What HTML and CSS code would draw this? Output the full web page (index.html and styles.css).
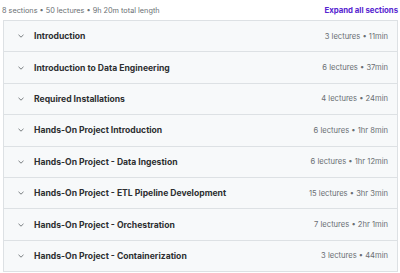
FILE: index.html
```html
<!DOCTYPE html>
<html lang="en">
<head>
    <meta charset="UTF-8">
    <meta name="viewport" content="width=device-width, initial-scale=1.0">
    <title>Course content</title>
    <link rel="stylesheet" href="styles.css">
</head>
<body>
    <div class="curriculum">
        <div class="summary">
            <span class="meta">8 sections • 50 lectures • 9h 20m total length</span>
            <button class="expand-all">Expand all sections</button>
        </div>

        <div class="sections">
            <div class="section">
                <span class="chevron"><svg viewBox="0 0 10 10"><path d="M2.5 3.8 5 6.2 7.5 3.8"/></svg></span>
                <span class="title">Introduction</span>
                <span class="info">3 lectures • 11min</span>
            </div>
            <div class="section">
                <span class="chevron"><svg viewBox="0 0 10 10"><path d="M2.5 3.8 5 6.2 7.5 3.8"/></svg></span>
                <span class="title">Introduction to Data Engineering</span>
                <span class="info">6 lectures • 37min</span>
            </div>
            <div class="section">
                <span class="chevron"><svg viewBox="0 0 10 10"><path d="M2.5 3.8 5 6.2 7.5 3.8"/></svg></span>
                <span class="title">Required Installations</span>
                <span class="info">4 lectures • 24min</span>
            </div>
            <div class="section">
                <span class="chevron"><svg viewBox="0 0 10 10"><path d="M2.5 3.8 5 6.2 7.5 3.8"/></svg></span>
                <span class="title">Hands-On Project Introduction</span>
                <span class="info">6 lectures • 1hr 8min</span>
            </div>
            <div class="section">
                <span class="chevron"><svg viewBox="0 0 10 10"><path d="M2.5 3.8 5 6.2 7.5 3.8"/></svg></span>
                <span class="title">Hands-On Project - Data Ingestion</span>
                <span class="info">6 lectures • 1hr 12min</span>
            </div>
            <div class="section">
                <span class="chevron"><svg viewBox="0 0 10 10"><path d="M2.5 3.8 5 6.2 7.5 3.8"/></svg></span>
                <span class="title">Hands-On Project - ETL Pipeline Development</span>
                <span class="info">15 lectures • 3hr 3min</span>
            </div>
            <div class="section">
                <span class="chevron"><svg viewBox="0 0 10 10"><path d="M2.5 3.8 5 6.2 7.5 3.8"/></svg></span>
                <span class="title">Hands-On Project - Orchestration</span>
                <span class="info">7 lectures • 2hr 1min</span>
            </div>
            <div class="section">
                <span class="chevron"><svg viewBox="0 0 10 10"><path d="M2.5 3.8 5 6.2 7.5 3.8"/></svg></span>
                <span class="title">Hands-On Project - Containerization</span>
                <span class="info">3 lectures • 44min</span>
            </div>
        </div>
    </div>
</body>
</html>
```

FILE: styles.css
```css
body {
    margin: 0;
    background: #fff;
    font-family: 'Inter', 'Liberation Sans', sans-serif;
    color: #2d2f31;
}

.curriculum {
    padding: 0 2px 0 3px;
}

.summary {
    display: flex;
    justify-content: space-between;
    align-items: center;
    height: 20px;
}

.meta {
    font-size: 7.3px;
    color: #6a6f73;
    margin-left: -1px;
}

.expand-all {
    border: none;
    background: none;
    padding: 0;
    font-family: inherit;
    font-size: 7.8px;
    font-weight: 700;
    color: #5624d0;
    cursor: pointer;
}

.sections {
    border: 1px solid #dde1e4;
}

.section {
    display: flex;
    align-items: center;
    height: 30.4px;
    background: #f7f9fa;
    border-bottom: 1px solid #dde1e4;
    padding: 0 9px 0 12px;
}

.section:last-child {
    border-bottom: none;
}

.chevron {
    display: flex;
    width: 10px;
    height: 10px;
    margin-right: 8px;
}

.chevron svg {
    width: 10px;
    height: 10px;
    fill: none;
    stroke: #6a6f73;
    stroke-width: 0.9;
}

.title {
    flex: 1;
    font-size: 8.6px;
    font-weight: 700;
}

.info {
    font-size: 7.6px;
    color: #6a6f73;
}
```
